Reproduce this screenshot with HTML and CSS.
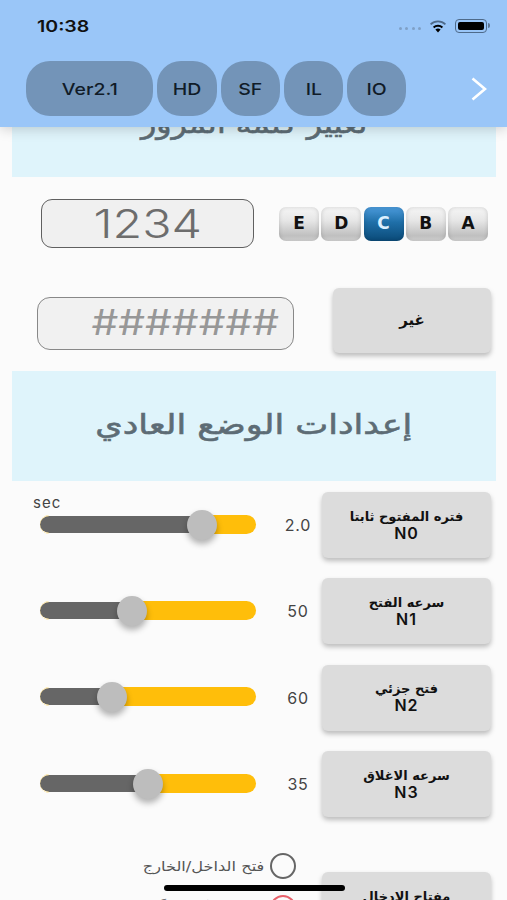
FILE: index.html
```html
<!DOCTYPE html>
<html lang="ar">
<head>
    <meta charset="UTF-8">
    <meta name="viewport" content="width=device-width, initial-scale=1.0">
    <title>Settings</title>
    <link rel="stylesheet" href="styles.css">
</head>
<body>
    <div class="screen">
        <header class="topbar">
            <div class="status">
                <span class="time">10:38</span>
                <div class="status-icons">
                    <span class="signal"><i></i><i></i><i></i><i></i></span>
                    <svg class="wifi" width="18" height="13" viewBox="0 0 18 13">
                        <path d="M9 12.6 6.4 9.6a3.8 3.8 0 0 1 5.2 0Z" fill="#000"/>
                        <path d="M4.6 7.6a6.4 6.4 0 0 1 8.8 0" fill="none" stroke="#000" stroke-width="2"/>
                        <path d="M1.6 4.4a10.8 10.8 0 0 1 14.8 0" fill="none" stroke="#4e6a8a" stroke-width="1.8"/>
                    </svg>
                    <span class="battery"><i></i></span>
                </div>
            </div>
            <nav class="tabs">
                <button class="tab tab-wide"><span>Ver2.1</span></button>
                <button class="tab tab-hd"><span>HD</span></button>
                <button class="tab"><span>SF</span></button>
                <button class="tab"><span>IL</span></button>
                <button class="tab"><span>IO</span></button>
                <svg class="next" width="16" height="24" viewBox="0 0 16 24">
                    <path d="M1.5 1.5 14 12 1.5 22.5" fill="none" stroke="#fff" stroke-width="2.6"/>
                </svg>
            </nav>
        </header>

        <main class="content">
            <section class="banner"><h2>تغيير كلمة المرور</h2></section>

            <div class="code-row">
                <div class="code-box"><span>1234</span></div>
                <div class="keys">
                    <span class="key">E</span>
                    <span class="key">D</span>
                    <span class="key key-on">C</span>
                    <span class="key">B</span>
                    <span class="key">A</span>
                </div>
            </div>

            <div class="pass-row">
                <div class="pass-box"><span>#######</span></div>
                <button class="btn btn-change">غير</button>
            </div>

            <section class="banner banner-normal"><h2>إعدادات الوضع العادي</h2></section>

            <div class="sliders">
                <div class="slider-row">
                    <div class="slider">
                        <span class="unit">sec</span>
                        <div class="fill" style="width: 75%"></div>
                        <div class="thumb" style="left: 75%"></div>
                    </div>
                    <span class="value">2.0</span>
                    <button class="btn">فتره المفتوح ثابتا<br><b>N0</b></button>
                </div>
                <div class="slider-row">
                    <div class="slider">
                        <div class="fill" style="width: 42.6%"></div>
                        <div class="thumb" style="left: 42.6%"></div>
                    </div>
                    <span class="value">50</span>
                    <button class="btn">سرعه الفتح<br><b>N1</b></button>
                </div>
                <div class="slider-row">
                    <div class="slider">
                        <div class="fill" style="width: 33.3%"></div>
                        <div class="thumb" style="left: 33.3%"></div>
                    </div>
                    <span class="value">60</span>
                    <button class="btn">فتح جزئي<br><b>N2</b></button>
                </div>
                <div class="slider-row">
                    <div class="slider">
                        <div class="fill" style="width: 50%"></div>
                        <div class="thumb" style="left: 50%"></div>
                    </div>
                    <span class="value">35</span>
                    <button class="btn">سرعه الاغلاق<br><b>N3</b></button>
                </div>
            </div>

            <div class="mode-row">
                <div class="radios">
                    <label class="radio-line"><span class="radio-text">فتح الداخل/الخارج</span><span class="radio"></span></label>
                    <label class="radio-line"><span class="radio-text">فتح داخلاً/خارجاً مع الإغلاق التلقائي</span><span class="radio radio-on"></span></label>
                </div>
                <button class="btn btn-entry">مفتاح الإدخال</button>
            </div>
        </main>

        <div class="home-bar"></div>
    </div>
</body>
</html>
```

FILE: styles.css
```css
* {
    box-sizing: border-box;
}
body {
    margin: 0;
    font-family: "Inter", "Liberation Sans", sans-serif;
    background-color: #fbfbfb;
}
.screen {
    position: relative;
    height: 900px;
    overflow: hidden;
}
.topbar {
    position: absolute;
    top: 0;
    left: 0;
    right: 0;
    height: 127px;
    background: #9ac6f8;
    box-shadow: 0 2px 12px rgba(0, 0, 0, 0.18);
    z-index: 10;
}
.status {
    display: flex;
    justify-content: space-between;
    align-items: center;
    height: 52px;
    padding: 0 20px 0 37px;
}
.time {
    font-size: 16px;
    font-weight: 600;
    color: #111;
    transform: scaleX(1.22);
    transform-origin: left;
}
.status-icons {
    display: flex;
    align-items: center;
    gap: 8px;
}
.signal {
    display: flex;
    gap: 3.5px;
    margin-top: 4px;
}
.signal i {
    width: 3px;
    height: 3px;
    border-radius: 50%;
    background: #7fa0c6;
}
.battery {
    position: relative;
    width: 32px;
    height: 14px;
    padding: 2px;
    border: 1.5px solid #4e6a8a;
    border-radius: 4px;
}
.battery i {
    display: block;
    height: 100%;
    background: #000;
    border-radius: 2px;
}
.battery::after {
    content: "";
    position: absolute;
    top: 3px;
    right: -4px;
    width: 2px;
    height: 5px;
    background: #5d7898;
    border-radius: 0 2px 2px 0;
}
.tabs {
    display: flex;
    align-items: center;
    gap: 4px;
    padding: 9px 0 0 26px;
}
.tab {
    width: 59px;
    height: 55px;
    padding: 0;
    border: none;
    border-radius: 24px;
    background: #7394b8;
    color: #111c28;
    font-family: inherit;
    font-size: 16.5px;
    font-weight: 500;
}
.tab span {
    display: inline-block;
    transform: scaleX(1.18);
}
.tab-wide {
    width: 127px;
}
.tab-hd {
    width: 60px;
}
.next {
    margin-left: 61px;
}
.content {
    padding: 67px 11px 0 12px;
}
.banner {
    display: flex;
    align-items: center;
    justify-content: center;
    height: 110px;
    background: #dff4fb;
}
.banner h2 {
    margin: 3px 0 0;
    font-family: "DejaVu Sans", sans-serif;
    font-size: 28px;
    font-weight: 400;
    color: #5d6c75;
    -webkit-text-stroke: 0.6px #5d6c75;
    transform: scaleX(1.13);
}
.banner-normal h2 {
    margin: 0 0 4px;
    transform: scaleX(1.25);
}
.code-row {
    display: flex;
    align-items: center;
    padding: 22px 0 0 29px;
}
.code-box {
    width: 213px;
    height: 49px;
    border: 1.5px solid #606060;
    border-radius: 11px;
    background: #f0f0f0;
    color: #6d6d6d;
    font-size: 39px;
    font-weight: 300;
    line-height: 48px;
    text-align: center;
}
.code-box span {
    display: inline-block;
    transform: scaleX(1.24);
}
.keys {
    display: flex;
    gap: 2.25px;
    margin-left: 25px;
}
.key {
    width: 40px;
    height: 34px;
    border-radius: 7px;
    background: linear-gradient(#f6f6f6, #e6e6e6 40%, #bfbfbf 85%, #d6d6d6);
    box-shadow: inset 0 0 4px rgba(0, 0, 0, 0.16);
    color: #111;
    font-family: "DejaVu Sans", sans-serif;
    font-size: 17px;
    font-weight: 700;
    line-height: 33px;
    text-align: center;
}
.key-on {
    background: linear-gradient(#4b9bdc, #1f6fa8 45%, #0a4a78);
    color: #dcefff;
}
.pass-row {
    display: flex;
    align-items: center;
    justify-content: space-between;
    margin-top: 40px;
    padding-left: 25px;
}
.pass-box {
    width: 257px;
    height: 53px;
    margin-top: 5px;
    padding-right: 14px;
    border: 1.5px solid #888;
    border-radius: 13px;
    background: #f1f1f1;
    color: #979797;
    font-size: 35px;
    line-height: 49px;
    text-align: right;
}
.pass-box span {
    display: inline-block;
    transform: scaleX(1.21);
    transform-origin: right;
}
.btn {
    flex-shrink: 0;
    width: 169px;
    height: 66px;
    padding: 0;
    border: none;
    border-radius: 6px;
    background: #dcdcdc;
    box-shadow: 0 3px 5px rgba(0, 0, 0, 0.25);
    color: #111;
    font-family: "DejaVu Sans", sans-serif;
    font-size: 13px;
    font-weight: 700;
    line-height: 17px;
}
.btn b {
    font-family: "Inter", sans-serif;
    font-size: 16px;
    font-weight: 600;
    letter-spacing: 1px;
}
.btn-change {
    width: 158px;
    height: 65px;
    margin-right: 5px;
    font-size: 15px;
}
.banner-normal {
    margin-top: 18px;
}
.sliders {
    display: flex;
    flex-direction: column;
    gap: 20.4px;
    margin-top: 11px;
}
.slider-row {
    display: flex;
    align-items: center;
    height: 66px;
    padding-left: 28px;
}
.slider {
    position: relative;
    flex-shrink: 0;
    width: 216px;
    height: 19px;
    margin-top: -2px;
    border-radius: 10px;
    background: #ffbe0a;
}
.fill {
    position: absolute;
    top: 0;
    bottom: 0;
    left: 0;
    border-top: 1px solid #fbfbfb;
    border-bottom: 1.5px solid #fbfbfb;
    border-radius: 10px 0 0 10px;
    background: #666;
    background-clip: padding-box;
}
.thumb {
    position: absolute;
    top: -5px;
    width: 30px;
    height: 30px;
    margin-left: -15px;
    border-radius: 50%;
    background: #bdbdbd;
    box-shadow: 0 4px 6px rgba(0, 0, 0, 0.3);
}
.unit {
    position: absolute;
    top: -22px;
    left: -7px;
    font-size: 15px;
    letter-spacing: 1px;
    color: #444;
}
.value {
    width: 66px;
    padding-left: 18px;
    color: #444;
    font-size: 16px;
    letter-spacing: 0.8px;
    text-align: center;
}
.slider-row .btn {
    margin-left: auto;
    margin-right: 5px;
}
.mode-row {
    display: flex;
    justify-content: space-between;
    margin-top: 36px;
}
.radios {
    display: flex;
    flex-direction: column;
    gap: 16px;
    width: 284px;
}
.radio-line {
    display: flex;
    align-items: center;
    justify-content: flex-end;
    gap: 6px;
}
.radio-text {
    font-family: "DejaVu Sans", sans-serif;
    font-size: 13.5px;
    color: #555;
    white-space: nowrap;
    transform: scaleX(1.2);
    transform-origin: right;
}
.radio {
    flex-shrink: 0;
    width: 26px;
    height: 26px;
    border: 2px solid #666;
    border-radius: 50%;
}
.radio-on {
    border-color: #e8606a;
}
.btn-entry {
    margin: 19px 5px 0 0;
    padding-bottom: 18px;
}
.home-bar {
    position: absolute;
    left: 164px;
    top: 885px;
    width: 181px;
    height: 6px;
    border-radius: 3px;
    background: #000;
    z-index: 11;
}
```
